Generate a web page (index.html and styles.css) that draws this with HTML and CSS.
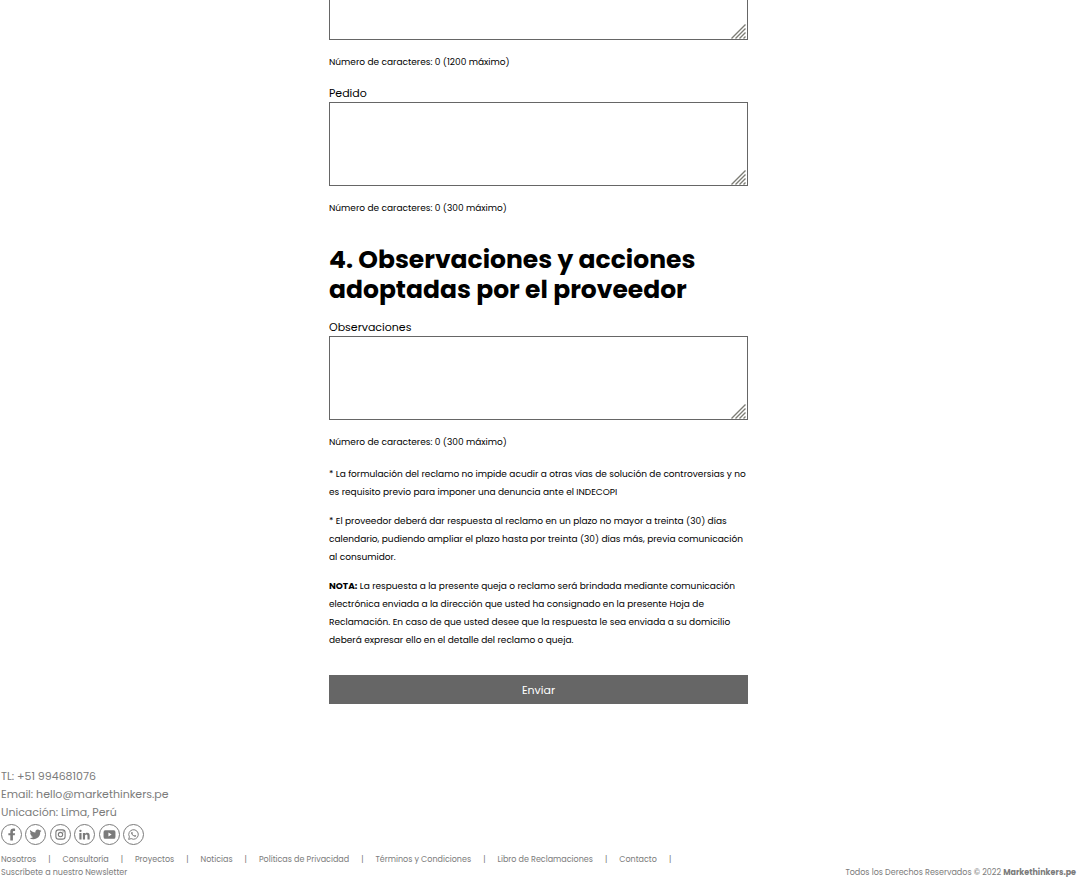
FILE: index.html
```html
<!DOCTYPE html>
<html lang="es">
<head>
<meta charset="utf-8">
<meta name="viewport" content="width=device-width, initial-scale=1">
<title>Libro de Reclamaciones</title>
<link rel="stylesheet" href="styles.css">
</head>
<body>
<svg class="defs" aria-hidden="true">
  <symbol id="grip" viewBox="0 0 15 15"><path d="M0.500 14.500 14.500 0.500M4.500 14.500 14.500 4.500M8.500 14.500 14.500 8.500M12.500 14.500 14.500 12.500" fill="none" stroke="#7c7c74" stroke-width="1.400"/></symbol>
</svg>
<main class="page">
  <form class="claim">
    <div class="field">
      <div class="box"><textarea class="area area-detail" aria-label="Detalle"></textarea><svg class="grip"><use href="#grip"/></svg></div>
      <p class="count">Número de caracteres: 0 (1200 máximo)</p>
    </div>
    <div class="field">
      <label class="label" for="pedido">Pedido</label>
      <div class="box"><textarea class="area" id="pedido"></textarea><svg class="grip"><use href="#grip"/></svg></div>
      <p class="count">Número de caracteres: 0 (300 máximo)</p>
    </div>
    <h2 class="title">4. Observaciones y acciones adoptadas por el proveedor</h2>
    <div class="field">
      <label class="label" for="observaciones">Observaciones</label>
      <div class="box"><textarea class="area" id="observaciones"></textarea><svg class="grip"><use href="#grip"/></svg></div>
      <p class="count">Número de caracteres: 0 (300 máximo)</p>
    </div>
    <div class="notes">
      <p>* La formulación del reclamo no impide acudir a otras vías de solución de controversias y no es requisito previo para imponer una denuncia ante el INDECOPI</p>
      <p>* El proveedor deberá dar respuesta al reclamo en un plazo no mayor a treinta (30) días calendario, pudiendo ampliar el plazo hasta por treinta (30) días más, previa comunicación al consumidor.</p>
      <p><b>NOTA:</b> La respuesta a la presente queja o reclamo será brindada mediante comunicación electrónica enviada a la dirección que usted ha consignado en la presente Hoja de Reclamación. En caso de que usted desee que la respuesta le sea enviada a su domicilio deberá expresar ello en el detalle del reclamo o queja.</p>
    </div>
    <button class="send" type="submit">Enviar</button>
  </form>
</main>
<footer class="footer">
  <address class="contact">
    <span>TL: +51 994681076</span>
    <span>Email: hello@markethinkers.pe</span>
    <span>Unicación: Lima, Perú</span>
  </address>
  <div class="social">
    <a href="#" aria-label="Facebook"><svg viewBox="0 0 24 24"><path d="M14.600 23v-9.500h3.400l.6-4h-4V7.400c0-1.100.5-1.900 2-1.900h2V1.400C18 1.200 16.700 1 15.500 1 12 1 9.800 2.900 9.800 6.300v3.200H6.200v4h3.600V23z"/></svg></a>
    <a href="#" aria-label="Twitter"><svg viewBox="0 0 24 24"><path d="M23 4.900c-.8.400-1.700.6-2.600.7.900-.6 1.600-1.400 2-2.500-.9.500-1.900.9-2.900 1.100A4.500 4.500 0 0 0 11.800 8.300C8 8.100 4.700 6.300 2.500 3.600c-1.200 2-.6 4.700 1.400 6-.7 0-1.400-.2-2-.5 0 2.100 1.500 4 3.600 4.400-.6.200-1.300.2-2 .1.600 1.800 2.200 3.100 4.200 3.100A9.100 9.100 0 0 1 1 18.600 12.800 12.800 0 0 0 20.700 7.200c.9-.6 1.700-1.400 2.300-2.300z"/></svg></a>
    <a href="#" aria-label="Instagram"><svg viewBox="0 0 24 24"><g fill="none" stroke="#7b7b7b" stroke-width="2"><rect x="3.500" y="3.500" width="17" height="17" rx="5"/><circle cx="12" cy="12" r="4"/></g><circle cx="16.800" cy="7.200" r="1.200"/></svg></a>
    <a href="#" aria-label="LinkedIn"><svg viewBox="0 0 24 24"><path d="M2.500 9h4v12h-4zM4.500 3a2.200 2.200 0 1 1 0 4.400A2.200 2.200 0 0 1 4.500 3zM9 9h4v1.700c.7-1.200 2.100-2.100 3.900-2.100 3.700 0 4.600 2.400 4.600 5.700V21h-4v-6.200c0-1.500-.2-3-2.100-3s-2.400 1.400-2.400 3V21H9z"/></svg></a>
    <a href="#" aria-label="YouTube"><svg viewBox="0 0 24 24"><path fill-rule="evenodd" d="M4 4h16q3 0 3 4v8q0 4-3 4H4q-3 0-3-4V8q0-4 3-4zm6 4.500v7l6-3.500z"/></svg></a>
    <a href="#" aria-label="WhatsApp"><svg viewBox="0 0 24 24"><path d="M3 21l1.400-4.700a8.800 8.800 0 1 1 3.300 3.300z" fill="none" stroke="#7b7b7b" stroke-width="1.800"/><path d="M8.700 7.200c-1.600.9-1.300 3-.3 4.500 1.500 2.300 3.300 3.900 6 4.500 1.500.2 2.700-.9 2.500-2.300l-2.300-1.200-1.100 1.300c-1.700-.6-2.900-1.800-3.600-3.400l.9-1.100-.9-2.300z"/></svg></a>
  </div>
  <div class="bottom">
    <div>
      <nav class="links">
        <a href="#">Nosotros</a><span>|</span><a href="#">Consultoría</a><span>|</span><a href="#">Proyectos</a><span>|</span><a href="#">Noticias</a><span>|</span><a href="#">Políticas de Privacidad</a><span>|</span><a href="#">Términos y Condiciones</a><span>|</span><a href="#">Libro de Reclamaciones</a><span>|</span><a href="#">Contacto</a><span>|</span>
      </nav>
      <a href="#">Suscríbete a nuestro Newsletter</a>
    </div>
    <p class="rights">Todos los Derechos Reservados © 2022 <b>Markethinkers.pe</b></p>
  </div>
</footer>
</body>
</html>
```
FILE: styles.css
```css
* { box-sizing: border-box; }
body, p, h2 { margin: 0; }
body {
  background: #fff;
  color: #000;
  font-family: Poppins, Inter, "Open Sans", sans-serif;
}
a { color: inherit; text-decoration: none; }
.defs { position: absolute; width: 0; height: 0; }
.page { padding-right: 1px; }
.claim { max-width: 419px; margin: 0 auto; }
.field + .field { margin-top: 14px; }
.label { display: block; font-size: 11px; line-height: 17px; }
.box { position: relative; }
.area {
  display: block;
  width: 100%;
  height: 84px;
  padding: 4px;
  border: 1px solid #666;
  border-radius: 0;
  background: #fff;
  font: inherit;
  font-size: 11px;
  resize: none;
}
.area-detail { height: 40px; border-top: 0; }
.grip {
  position: absolute;
  right: 2px;
  bottom: 1px;
  width: 15px;
  height: 15px;
  pointer-events: none;
}
.count { margin-top: 13px; font-size: 9px; line-height: 18px; }
.title { margin: 28px 0 14px; font-size: 25px; line-height: 30px; font-weight: 700; }
.notes {
  display: grid;
  gap: 11px;
  margin-top: 14px;
  font-size: 9px;
  line-height: 18px;
}
.send {
  display: block;
  width: 100%;
  margin-top: 26px;
  padding: 7px 6px 5px;
  border: 0;
  background: #666;
  color: #fff;
  font-family: inherit;
  font-size: 11px;
  line-height: 17px;
}
.footer { margin-top: 63px; padding: 0 2px 4px 1px; color: #7b7b7b; }
.contact { display: grid; font-size: 11px; line-height: 18px; font-style: normal; }
.social {
  display: flex;
  justify-content: space-between;
  max-width: 143px;
  margin-top: 3px;
}
.social a {
  display: grid;
  place-items: center;
  width: 21px;
  height: 21px;
  border: 1px solid #7b7b7b;
  border-radius: 50%;
}
.social svg { display: block; width: 13px; height: 13px; fill: #7b7b7b; }
.bottom {
  display: flex;
  justify-content: space-between;
  align-items: flex-end;
  margin-top: 8px;
  font-size: 8px;
  line-height: 13px;
}
.bottom a { display: block; }
.links { display: flex; flex-wrap: wrap; column-gap: 12px; }
```
